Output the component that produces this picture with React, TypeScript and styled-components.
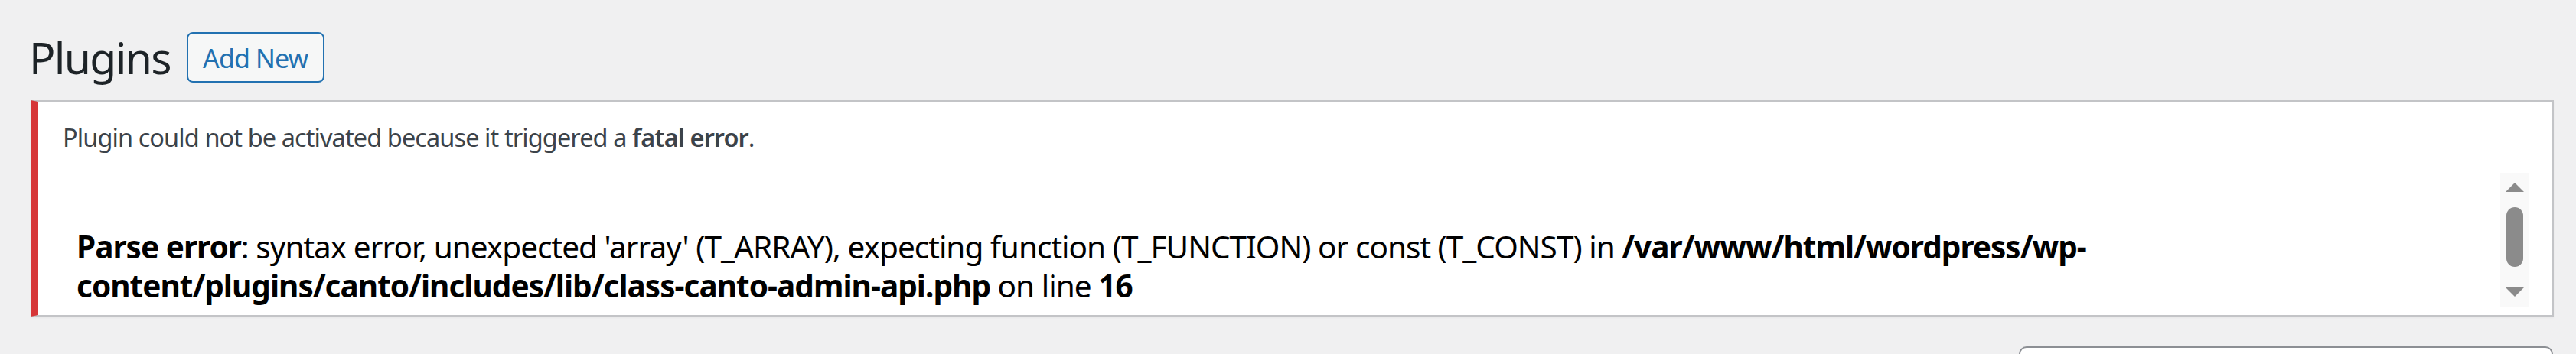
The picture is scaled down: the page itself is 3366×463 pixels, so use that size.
import React from "react";
import styled, { createGlobalStyle } from "styled-components";

const GlobalStyle = createGlobalStyle`
  html, body {
    margin: 0;
    background: #f0f0f1;
    overflow: hidden;
  }
  body {
    font-family: "Noto Sans", "Open Sans", sans-serif;
    color: #3c434a;
  }
`;

const Wrap = styled.div`
  box-sizing: border-box;
  width: 3366px;
  height: 463px;
  padding: 42px 29px 0 40px;
  overflow: hidden;
`;

const TitleRow = styled.div`
  display: flex;
  align-items: flex-start;
  gap: 21px;
`;

const Title = styled.h1`
  margin: 0 0 0 -2px;
  font-size: 57px;
  font-weight: 400;
  line-height: 66px;
  letter-spacing: -0.03em;
  color: #1d2327;
`;

const AddNewButton = styled.button`
  box-sizing: border-box;
  width: 180px;
  height: 66px;
  padding: 2px 0 0;
  border: 2px solid #2271b1;
  border-radius: 8px;
  background: #f6f7f7;
  color: #2271b1;
  font-family: "Noto Sans", "Open Sans", sans-serif;
  font-size: 34px;
  line-height: 60px;
  letter-spacing: -0.025em;
  text-align: center;
  cursor: pointer;
`;

const Notice = styled.div`
  margin-top: 23px;
  padding: 2px 30px;
  background: #fff;
  border: 2px solid #c3c4c7;
  border-left: 10px solid #d63638;
  box-shadow: 0 2px 2px rgba(0, 0, 0, 0.04);
`;

const NoticeText = styled.p`
  margin: 16px 0;
  padding: 5px 2px;
  font-size: 32.5px;
  line-height: 48.75px;
  letter-spacing: -0.028em;
  color: #3c434a;

  strong {
    font-weight: 600;
  }
`;

const ErrorFrame = styled.div`
  display: flex;
  height: 175px;
  margin-bottom: 9px;
  background: #fff;
`;

const ErrorBody = styled.div`
  flex: 1;
  overflow: hidden;
  padding: 20px;
  font-size: 40.5px;
  line-height: 51px;
  letter-spacing: -0.024em;
  color: #000;

  b {
    font-weight: 700;
  }
`;

const ScrollBar = styled.div`
  flex: none;
  width: 38px;
  display: flex;
  flex-direction: column;
  align-items: center;
  background: #f9f9f9;
`;

const ScrollArrow = styled.div<{ $end?: boolean }>`
  width: 100%;
  height: 38px;
  display: flex;
  align-items: center;
  justify-content: center;
  margin-top: ${(p) => (p.$end ? "auto" : "0")};
`;

const Thumb = styled.div`
  width: 22px;
  height: 78px;
  margin-top: 7px;
  border-radius: 11px;
  background: #8b8b8b;
`;

const SearchRow = styled.div`
  display: flex;
  justify-content: flex-end;
  margin-top: 39px;
`;

const SearchInput = styled.input`
  box-sizing: border-box;
  width: 698px;
  height: 80px;
  margin-right: 1px;
  border: 2px solid #8c8f94;
  border-radius: 10px;
  background: #fff;
`;

const Triangle: React.FC<{ up?: boolean }> = ({ up }) => (
  <svg width="24" height="12" viewBox="0 0 24 12">
    <polygon points={up ? "0,12 12,0 24,12" : "0,0 24,0 12,12"} fill="#8b8b8b" />
  </svg>
);

const App: React.FC = () => {
  return (
    <Wrap>
      <GlobalStyle />
      <TitleRow>
        <Title>Plugins</Title>
        <AddNewButton>Add New</AddNewButton>
      </TitleRow>
      <Notice>
        <NoticeText>
          Plugin could not be activated because it triggered a <strong>fatal error</strong>.
        </NoticeText>
        <ErrorFrame>
          <ErrorBody>
            <br />
            <b>Parse error</b>: syntax error, unexpected 'array' (T_ARRAY), expecting function
            (T_FUNCTION) or const (T_CONST) in <b>/var/www/html/wordpress/wp-</b>
            <br />
            <b>content/plugins/canto/includes/lib/class-canto-admin-api.php</b> on line <b>16</b>
            <br />
          </ErrorBody>
          <ScrollBar>
            <ScrollArrow>
              <Triangle up />
            </ScrollArrow>
            <Thumb />
            <ScrollArrow $end>
              <Triangle />
            </ScrollArrow>
          </ScrollBar>
        </ErrorFrame>
      </Notice>
      <SearchRow>
        <SearchInput type="search" aria-label="Search installed plugins" />
      </SearchRow>
    </Wrap>
  );
};

export default App;
